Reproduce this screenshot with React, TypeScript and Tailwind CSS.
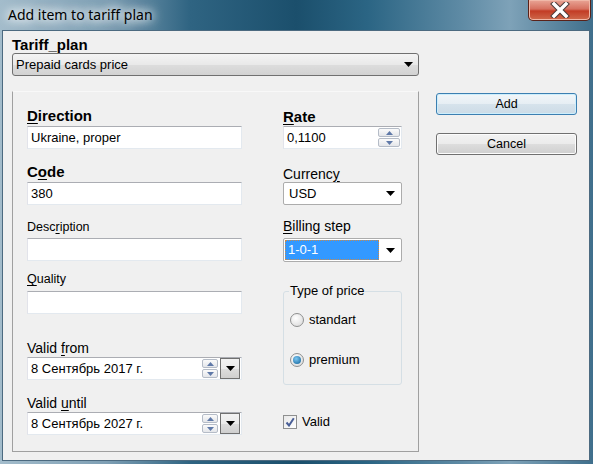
import React from "react";

const F = "font-['Liberation_Sans',Arial,sans-serif]";

function U({ children }: { children: React.ReactNode }) {
  return <span className="underline underline-offset-[2px]">{children}</span>;
}

function Arrow() {
  return (
    <svg width="9" height="5" viewBox="0 0 9 5">
      <path d="M0 0h9L4.5 5z" fill="#000" />
    </svg>
  );
}

function SpinBtn({ up }: { up?: boolean }) {
  return (
    <div className="h-[9px] border border-[#b5bcc7] rounded-[2px] bg-[linear-gradient(#fbfbfb,#e4e6ea)] flex items-center justify-center">
      <svg width="7" height="4" viewBox="0 0 7 4">
        <path d={up ? "M0 4h7L3.5 0z" : "M0 0h7L3.5 4z"} fill="#5f79a8" />
      </svg>
    </div>
  );
}

function TextBox({ children }: { children?: React.ReactNode }) {
  return (
    <div className="h-[23px] bg-white border border-[#e3e9ef] border-t-[#abadb3] border-l-[#e2e3ea] flex items-center pl-[3px] text-[13px] text-black">
      {children}
    </div>
  );
}

function DateBox({ value }: { value: string }) {
  return (
    <div className="h-[23px] bg-white border border-[#e3e9ef] border-t-[#abadb3] border-l-[#e2e3ea] flex items-center pl-[3px] text-[13px] text-black">
      <span className="flex-1">{value}</span>
      <div className="w-[16px] flex flex-col gap-px">
        <SpinBtn up />
        <SpinBtn />
      </div>
      <div className="ml-[2px] mr-px w-[20px] h-[21px] border border-[#707070] bg-[linear-gradient(#f2f2f2,#ebebeb_50%,#dddddd_51%,#cfcfcf)] flex items-center justify-center">
        <Arrow />
      </div>
    </div>
  );
}

function Radio({ checked, label }: { checked?: boolean; label: string }) {
  return (
    <div className="flex items-center gap-[5px] h-[15px]">
      <div className="w-[14px] h-[14px] rounded-full border border-[#8e8f8f] bg-[radial-gradient(circle_at_40%_35%,#ffffff,#d6d6d6)] flex items-center justify-center">
        {checked && (
          <div className="w-[8px] h-[8px] rounded-full bg-[radial-gradient(circle_at_40%_35%,#7cc7f2,#0d5f97)]" />
        )}
      </div>
      <span className="text-[13px]">{label}</span>
    </div>
  );
}

export default function App() {
  return (
    <div
      className={`${F} w-[593px] h-[464px] flex flex-col overflow-hidden bg-[linear-gradient(90deg,#a3bccb_0%,#7e9fb4_18%,#2f6482_32%,#1b4f6c_50%,#2b6584_62%,#5f8ba5_78%,#7ea2b8_86%,#3f6f8c_100%)]`}
    >
      {/* Title bar */}
      <div className="h-[30px] flex items-start justify-between">
        <span className="ml-[8px] mt-[6px] text-[14px] leading-[18px] font-['Noto_Sans',sans-serif] text-black [text-shadow:0_0_8px_#fff,0_0_12px_#fff,0_0_14px_#e8f0f5]">
          Add item to tariff plan
        </span>
        <div className="mr-[2px] w-[63px] h-[21px] border border-t-0 border-[#5a2219] rounded-b-[5px] bg-[linear-gradient(#e9a596,#d6705f_45%,#c23c25_55%,#cf6a4c)] shadow-[inset_0_0_0_1px_#f0b8a8] flex items-center justify-center">
          <svg width="20" height="16" viewBox="0 0 20 16">
            <path d="M4 2L16 14M16 2L4 14" stroke="#4a3a38" strokeWidth="5.5" strokeLinecap="square" />
            <path d="M4 2L16 14M16 2L4 14" stroke="#fff" strokeWidth="3.5" strokeLinecap="square" />
          </svg>
        </div>
      </div>

      {/* Client area */}
      <div className="ml-[2px] mr-[3px] h-[431px] border border-[#4c6a80] bg-[#f0f0f0] flex">
        {/* Left side */}
        <div className="ml-[9px] w-[407px] flex flex-col">
          <div className="mt-[5px] text-[15px] leading-[17px] font-bold text-black">Tariff_plan</div>
          <div className="h-[23px] border border-[#707070] rounded-[3px] bg-[linear-gradient(#f4f4f4,#e9e9e9_50%,#dddddd_51%,#d2d2d2)] flex items-center justify-between pl-[3px] pr-[5px] text-[13px]">
            <span>Prepaid cards price</span>
            <Arrow />
          </div>

          {/* Panel */}
          <div className="mt-[15px] h-[361px] border border-[#a0a0a0] border-t-[#f8f8f8] flex pl-[14px]">
            {/* Left column */}
            <div className="w-[215px] flex flex-col">
              <div className="mt-[15px] text-[15px] leading-[17px] font-bold">
                <U>D</U>irection
              </div>
              <div className="mt-[2px]">
                <TextBox>Ukraine, proper</TextBox>
              </div>
              <div className="mt-[14px] text-[15px] leading-[17px] font-bold">
                C<U>o</U>de
              </div>
              <div className="mt-[2px]">
                <TextBox>380</TextBox>
              </div>
              <div className="mt-[14px] text-[12.5px] leading-[16px]">
                Desc<U>r</U>iption
              </div>
              <div className="mt-[3px]">
                <TextBox />
              </div>
              <div className="mt-[10px] text-[12.5px] leading-[16px]">
                <U>Q</U>uality
              </div>
              <div className="mt-[4px]">
                <TextBox />
              </div>
              <div className="mt-[25px] text-[14px] leading-[18px]">
                Valid <U>f</U>rom
              </div>
              <DateBox value="8 Сентябрь 2017 г." />
              <div className="mt-[15px] text-[14px] leading-[17px]">
                Valid <U>u</U>ntil
              </div>
              <DateBox value="8 Сентябрь 2027 г." />
            </div>

            {/* Right column */}
            <div className="ml-[41px] w-[119px] flex flex-col">
              <div className="mt-[16px] text-[15px] leading-[17px] font-bold">
                <U>R</U>ate
              </div>
              <div className="mt-px h-[23px] bg-white border border-[#e3e9ef] border-t-[#abadb3] border-l-[#e2e3ea] flex items-center justify-between pl-[3px] pr-px text-[13px]">
                <span>0,1100</span>
                <div className="w-[22px] flex flex-col gap-px">
                  <SpinBtn up />
                  <SpinBtn />
                </div>
              </div>
              <div className="mt-[17px] text-[14px] leading-[16px]">
                Currenc<U>y</U>
              </div>
              <div className="h-[23px] bg-white border border-[#acacac] rounded-[2px] flex items-center justify-between pl-[5px] pr-[6px] text-[13px]">
                <span>USD</span>
                <Arrow />
              </div>
              <div className="mt-[13px] text-[14px] leading-[16px]">
                <U>B</U>illing step
              </div>
              <div className="mt-[4px] h-[24px] bg-white border border-[#acacac] rounded-[2px] flex items-center p-px pr-[6px] text-[13px]">
                <div className="w-[94px] h-full bg-[#3399ff] outline outline-1 outline-dotted outline-[#c9894a] -outline-offset-1 flex items-center pl-[3px] text-white">
                  1-0-1
                </div>
                <div className="flex-1 flex justify-end">
                  <Arrow />
                </div>
              </div>

              <fieldset className="mt-[21px] h-[102px] border border-[#d5dfe5] rounded-[3px] pl-[6px]">
                <legend className="-ml-px px-px text-[13px] leading-[16px]">Type of price</legend>
                <div className="mt-[13px]">
                  <Radio label="standart" />
                </div>
                <div className="mt-[25px]">
                  <Radio checked label="premium" />
                </div>
              </fieldset>

              <div className="mt-[29px] flex items-center gap-[5px] h-[15px]">
                <div className="w-[14px] h-[14px] border border-[#8e8f8f] bg-[linear-gradient(135deg,#e8e8e8,#ffffff)] flex items-center justify-center">
                  <svg width="10" height="10" viewBox="0 0 10 10">
                    <path d="M1.5 5.5L4 8.5L8.8 1.2" stroke="#4a5f97" strokeWidth="2" fill="none" />
                  </svg>
                </div>
                <span className="text-[13px]">Valid</span>
              </div>
            </div>
          </div>
        </div>

        {/* Buttons */}
        <div className="ml-[17px] w-[141px] flex flex-col">
          <div className="mt-[62px] h-[22px] border border-[#3c7fb1] rounded-[3px] bg-[linear-gradient(#f1f6f9,#e6eef4_50%,#d6e3ec_51%,#ccdbe6)] shadow-[inset_0_0_0_1px_#cdeefc] flex items-center justify-center text-[12.5px]">
            Add
          </div>
          <div className="mt-[18px] h-[22px] border border-[#707070] rounded-[3px] bg-[linear-gradient(#f2f2f2,#ebebeb_50%,#dddddd_51%,#cfcfcf)] shadow-[inset_0_0_0_1px_#fcfcfc] flex items-center justify-center text-[12.5px]">
            Cancel
          </div>
        </div>
      </div>
    </div>
  );
}
